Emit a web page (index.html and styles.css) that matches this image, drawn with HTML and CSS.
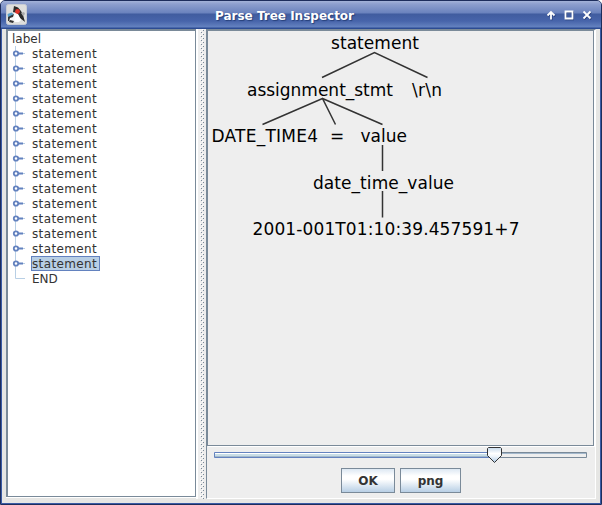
FILE: index.html
```html
<!DOCTYPE html>
<html lang="en">
<head>
<meta charset="utf-8">
<title>Parse Tree Inspector</title>
<link rel="stylesheet" href="styles.css">
</head>
<body>
<svg width="0" height="0" class="symbols">
  <symbol id="handle" viewBox="0 0 19 15">
    <path d="M3.500 0v15M11 7.500h2" stroke="#b8cfe5"/>
    <path d="M6 7.500h5" stroke="#6382bf" stroke-width="2"/>
    <circle cx="4" cy="7.500" r="2.200" fill="#fff" stroke="#6382bf" stroke-width="1.800"/>
  </symbol>
  <symbol id="elbow" viewBox="0 0 19 15">
    <path d="M3.500 0v7.500H13" fill="none" stroke="#b8cfe5"/>
  </symbol>
</svg>
<div class="window">
  <header class="titlebar">
    <svg class="app-icon" width="21" height="21" viewBox="0 0 21 21">
      <rect x=".5" y=".5" width="20" height="20" rx="2" fill="#dededc" stroke="#c8ccd4"/>
      <path d="M2 14l5-3 3-6 2 5v7l-5 1-3-2z" fill="#f8f8f8"/>
      <path d="M1.500 10l4-1.500 2 1.500-2 3H2z" fill="#58a0c8"/>
      <path d="M2 13l6-3-1 3-3 1-1 3-1 0zM4 16l4 1-1 2-4-1z" fill="#333"/>
      <path d="M8 2l4 1.500 3 3.500 2 4 2 7-5-4-3-5-4-1z" fill="#2a2a2a"/>
      <path d="M9 11l3-1 3 6-2 2H9z" fill="#fff"/>
      <circle cx="11.500" cy="7.500" r="2.400" fill="#e0332a"/>
      <path d="M15 9l3-1 1 2-2 2z" fill="#aaa"/>
    </svg>
    <h1 class="title">Parse Tree Inspector</h1>
    <svg class="controls" width="50" height="14" viewBox="0 0 50 14">
      <g class="control-shadow" transform="translate(.6 .8)">
        <path d="M7 11.500V4.500M3.500 7.500L7 4l3.500 3.500"/><path d="M21.500 3.500h7v7h-7z"/><path d="M39.500 3.500l7 7m0-7l-7 7"/>
      </g>
      <g class="control-mark">
        <path d="M7 11.500V4.500M3.500 7.500L7 4l3.500 3.500"/><path d="M21.500 3.500h7v7h-7z"/><path d="M39.500 3.500l7 7m0-7l-7 7"/>
      </g>
    </svg>
  </header>
  <main class="content">
    <section class="tree">
      <div class="root">label</div>
      <ul class="nodes">
        <li><svg><use href="#handle"/></svg><span>statement</span></li>
        <li><svg><use href="#handle"/></svg><span>statement</span></li>
        <li><svg><use href="#handle"/></svg><span>statement</span></li>
        <li><svg><use href="#handle"/></svg><span>statement</span></li>
        <li><svg><use href="#handle"/></svg><span>statement</span></li>
        <li><svg><use href="#handle"/></svg><span>statement</span></li>
        <li><svg><use href="#handle"/></svg><span>statement</span></li>
        <li><svg><use href="#handle"/></svg><span>statement</span></li>
        <li><svg><use href="#handle"/></svg><span>statement</span></li>
        <li><svg><use href="#handle"/></svg><span>statement</span></li>
        <li><svg><use href="#handle"/></svg><span>statement</span></li>
        <li><svg><use href="#handle"/></svg><span>statement</span></li>
        <li><svg><use href="#handle"/></svg><span>statement</span></li>
        <li><svg><use href="#handle"/></svg><span>statement</span></li>
        <li class="selected"><svg><use href="#handle"/></svg><span>statement</span></li>
        <li class="leaf"><svg><use href="#elbow"/></svg><span>END</span></li>
      </ul>
    </section>
    <div class="divider"></div>
    <section class="viewer">
      <div class="canvas">
        <svg class="graph" width="385" height="414" viewBox="208 31 385 414">
          <path class="edges" d="M322 77.500L374.500 52.500 427.500 77.500M262.500 124.500L322.500 98.500 335.500 124.500M322.500 98.500L382.500 124.500M382.500 145v26M382.500 191v26.500"/>
          <g class="labels">
            <text x="331" y="49" textLength="88">statement</text>
            <text x="247" y="96" textLength="146">assignment_stmt</text>
            <text x="412" y="96" textLength="30">\r\n</text>
            <text x="211.500" y="142" textLength="106.500">DATE_TIME4</text>
            <text x="330" y="142">=</text>
            <text x="360.500" y="142" textLength="46.500">value</text>
            <text x="313" y="189" textLength="141">date_time_value</text>
            <text x="252.500" y="235" textLength="267">2001-001T01:10:39.457591+7</text>
          </g>
        </svg>
      </div>
      <svg class="slider" width="374" height="18" viewBox="213 446 374 18">
        <defs>
          <linearGradient id="thumb" x2="0" y2="1"><stop offset="0" stop-color="#c5d8ea"/><stop offset=".4" stop-color="#fff"/><stop offset=".6" stop-color="#eef4fa"/><stop offset="1" stop-color="#a9c6e2"/></linearGradient>
        </defs>
        <path d="M495 452.500h91.500v5H495z" fill="#eee" stroke="#7a8a99"/>
        <path d="M495 453.500h91" stroke="#a3b8cc"/>
        <path d="M214.500 452.500H495v5H214.500z" fill="#c8dde6" stroke="#6382bf"/>
        <path d="M215 453.500h280" stroke="#fff"/>
        <path d="M215 456.500h280" stroke="#a3b8cc"/>
        <path d="M488.500 447.500h12l1 1v7l-7 7-7-7v-7z" fill="url(#thumb)" stroke="#333"/>
      </svg>
      <div class="buttons"><button class="ok">OK</button><button class="png">png</button></div>
    </section>
  </main>
</div>
</body>
</html>
```
FILE: styles.css
```css
* { box-sizing: border-box; }
body { margin: 0; font-family: "DejaVu Sans", sans-serif; font-size: 12px; color: #333; }
.symbols { display: none; }
.window {
  width: 602px; height: 505px; display: flex; flex-direction: column;
  border: 1px solid #1d2d5c; border-radius: 5px 5px 0 0; background: #e6e6e4;
  box-shadow: inset 0 0 0 1px #3a5ba5; overflow: hidden;
}
.titlebar {
  height: 28px; flex: none; display: grid; grid-template-columns: 60px 1fr 60px; align-items: center;
  background: linear-gradient(#a4b3d9 0, #8d9fce 3px, #6a82bd 12px, #405c9f 13px, #4764aa 20px, #6482c0 26px, #2c4b93 27px);
}
.app-icon { margin: -1px 0 0 5px; }
.title { margin: 1px 33px 0 0; font-size: 12px; line-height: 16px; font-weight: bold; text-align: center; color: #fff; text-shadow: 1px 1px 1px #263f78; }
.controls { margin-left: 3px; fill: none; stroke-width: 1.800; }
.control-shadow { stroke: #253c76; }
.control-mark { stroke: #fff; }
.content { flex: 1; display: flex; padding: 0 5px 5px; }
.tree {
  width: 190px; margin-bottom: 2px; padding: 0 0 0 4px;
  background: #fff; border: 1px solid #7a8a99; border-width: 2px 1px 1px 2px; line-height: 17px;
  box-shadow: 0 1px #fff;
}
.root { height: 15px; }
.nodes { list-style: none; margin: 0; padding: 0; }
.nodes li { display: flex; height: 15px; }
.nodes svg { width: 19px; height: 15px; flex: none; }
.nodes span { padding: 0 3px 0 1px; height: 15px; letter-spacing: .36px; }
.nodes .leaf span { letter-spacing: 0; }
.selected span { background: #b8cfe5; outline: 1px solid #6382bf; outline-offset: -1px; }
.divider {
  width: 10px; border-left: 2px solid #fff;
  background:
    radial-gradient(circle at .5px .5px, #7a8a99 .6px, transparent .7px) 3px 3px / 50px 4px repeat-y,
    radial-gradient(circle at .5px .5px, #7a8a99 .6px, transparent .7px) 5px 5px / 50px 4px repeat-y,
    linear-gradient(#fff 1px, transparent 1px) 2px 2px / 1px 4px repeat-y,
    linear-gradient(#fff 1px, transparent 1px) 4px 4px / 1px 4px repeat-y,
    #eee;
}
.viewer { flex: 1; background: #eee; border: 1px solid #fff; border-top-color: #7a8a99; border-left-color: #7a8a99; }
.canvas { width: 387px; height: 416px; border: 1px solid #7a8a99; box-shadow: 1px 1px #fff; }
.graph { display: block; }
.edges { fill: none; stroke: #333; stroke-width: 1.500; }
.labels { font-size: 17px; fill: #000; }
.slider { display: block; margin-left: 6px; }
.buttons { display: flex; gap: 5px; margin: 4px 0 0 134px; }
.buttons button { height: 25px; padding: 0; border: 1px solid #7a8a99; font: bold 12px "DejaVu Sans", sans-serif; color: #333; background: linear-gradient(#dde8f3, #fff 30%, #fff 45%, #b8cfe5); }
.ok { width: 54px; }
.png { width: 61px; }
```
